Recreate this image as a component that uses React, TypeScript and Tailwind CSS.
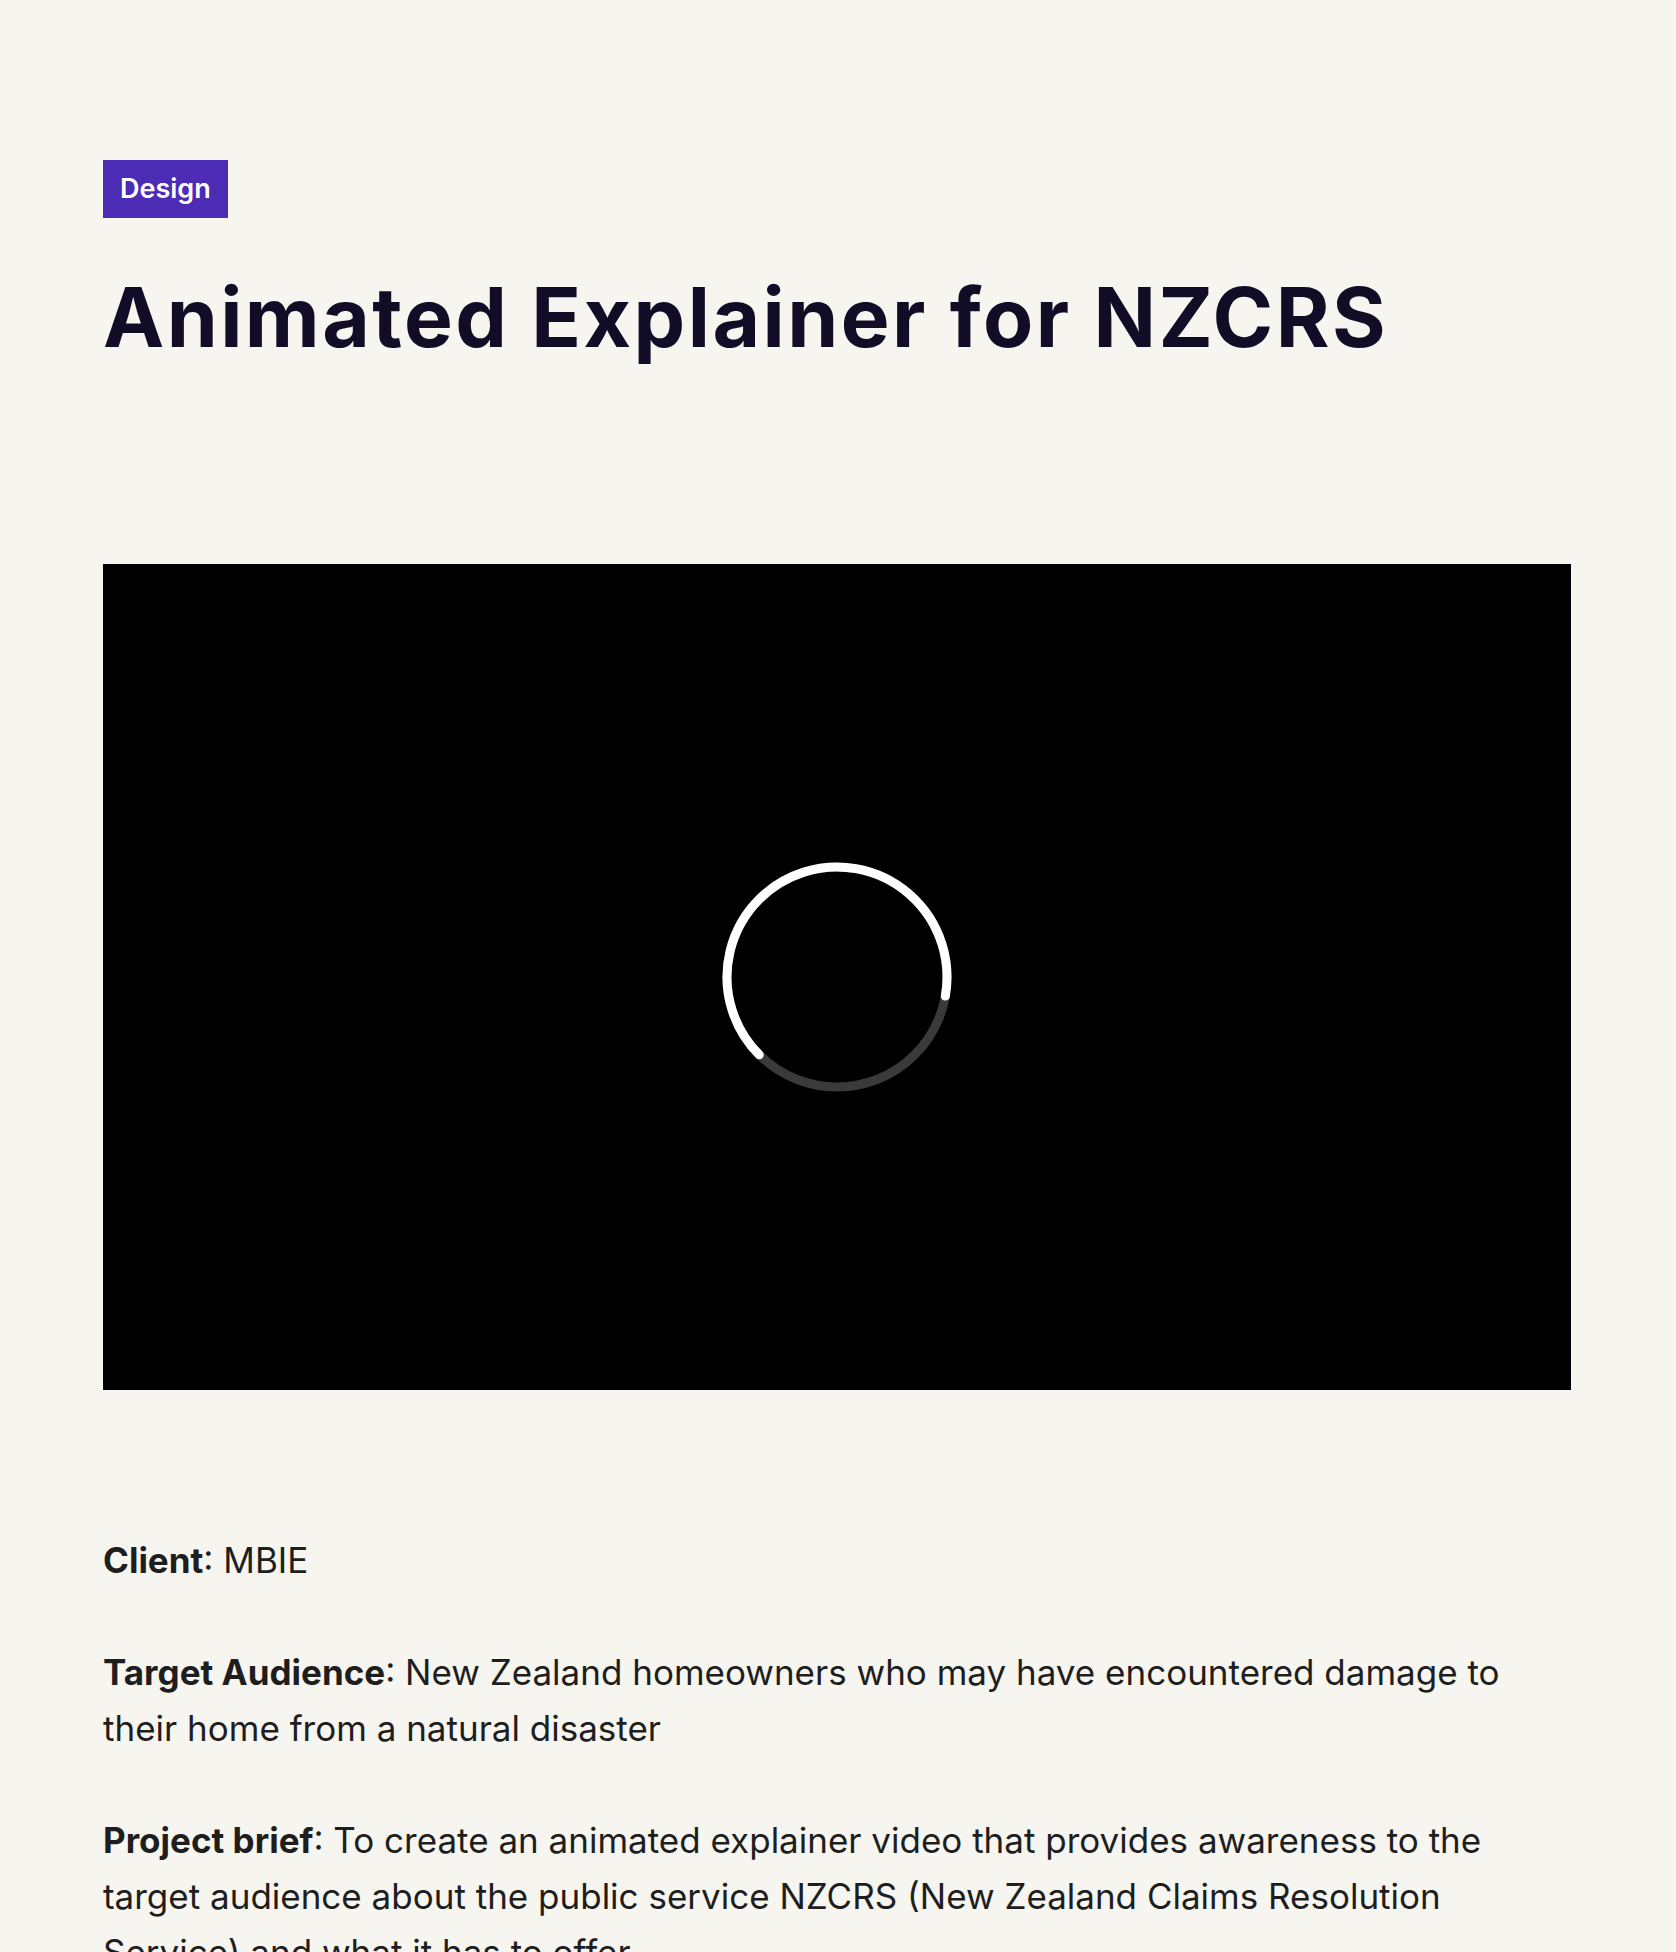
import { Fragment } from 'react';

type Fact = { label: string; text: string };

const facts: Fact[] = [
  { label: 'Client', text: 'MBIE' },
  {
    label: 'Target Audience',
    text: 'New Zealand homeowners who may have encountered damage to their home from a natural disaster',
  },
  {
    label: 'Project brief',
    text: 'To create an animated explainer video that provides awareness to the target audience about the public service NZCRS (New Zealand Claims Resolution Service) and what it has to offer.',
  },
];

// point on the spinner ring for a given angle (degrees, clockwise from 3 o'clock)
function pt(cx: number, cy: number, r: number, deg: number) {
  const a = (deg * Math.PI) / 180;
  return `${(cx + r * Math.cos(a)).toFixed(2)} ${(cy + r * Math.sin(a)).toFixed(2)}`;
}

function Spinner() {
  const c = 120;
  const r = 110;
  return (
    <svg width="240" height="240" viewBox="0 0 240 240">
      <circle cx={c} cy={c} r={r} fill="none" stroke="#3a3a3a" strokeWidth="9" />
      <path
        d={`M ${pt(c, c, r, 135)} A ${r} ${r} 0 1 1 ${pt(c, c, r, 10)}`}
        fill="none"
        stroke="#ffffff"
        strokeWidth="9"
        strokeLinecap="round"
      />
    </svg>
  );
}

export default function App() {
  return (
    <div className="min-h-screen bg-[#f7f5ef] px-[103px] pt-[160px] pb-24 font-['Inter','Liberation_Sans',sans-serif]">
      <span className="inline-block h-[58px] bg-[#4c2bb5] px-[17px] text-[27px] font-semibold leading-[58px] text-white">
        Design
      </span>

      <h1 className="mt-[56px] text-[82px] font-bold leading-[88px] tracking-[0.03em] text-[#110d26]">
        Animated Explainer for NZCRS
      </h1>

      {/* video player, still loading */}
      <div className="mt-[202px] flex aspect-video w-[1468px] items-center justify-center bg-black">
        <Spinner />
      </div>

      <div className="mt-[142px] w-[1468px] text-[35px] leading-[56px] text-[#1e1e1e]">
        {facts.map((f) => (
          <Fragment key={f.label}>
            <p className="mb-[56px]">
              <strong className="font-bold">{f.label}</strong>: {f.text}
            </p>
          </Fragment>
        ))}
      </div>
    </div>
  );
}
